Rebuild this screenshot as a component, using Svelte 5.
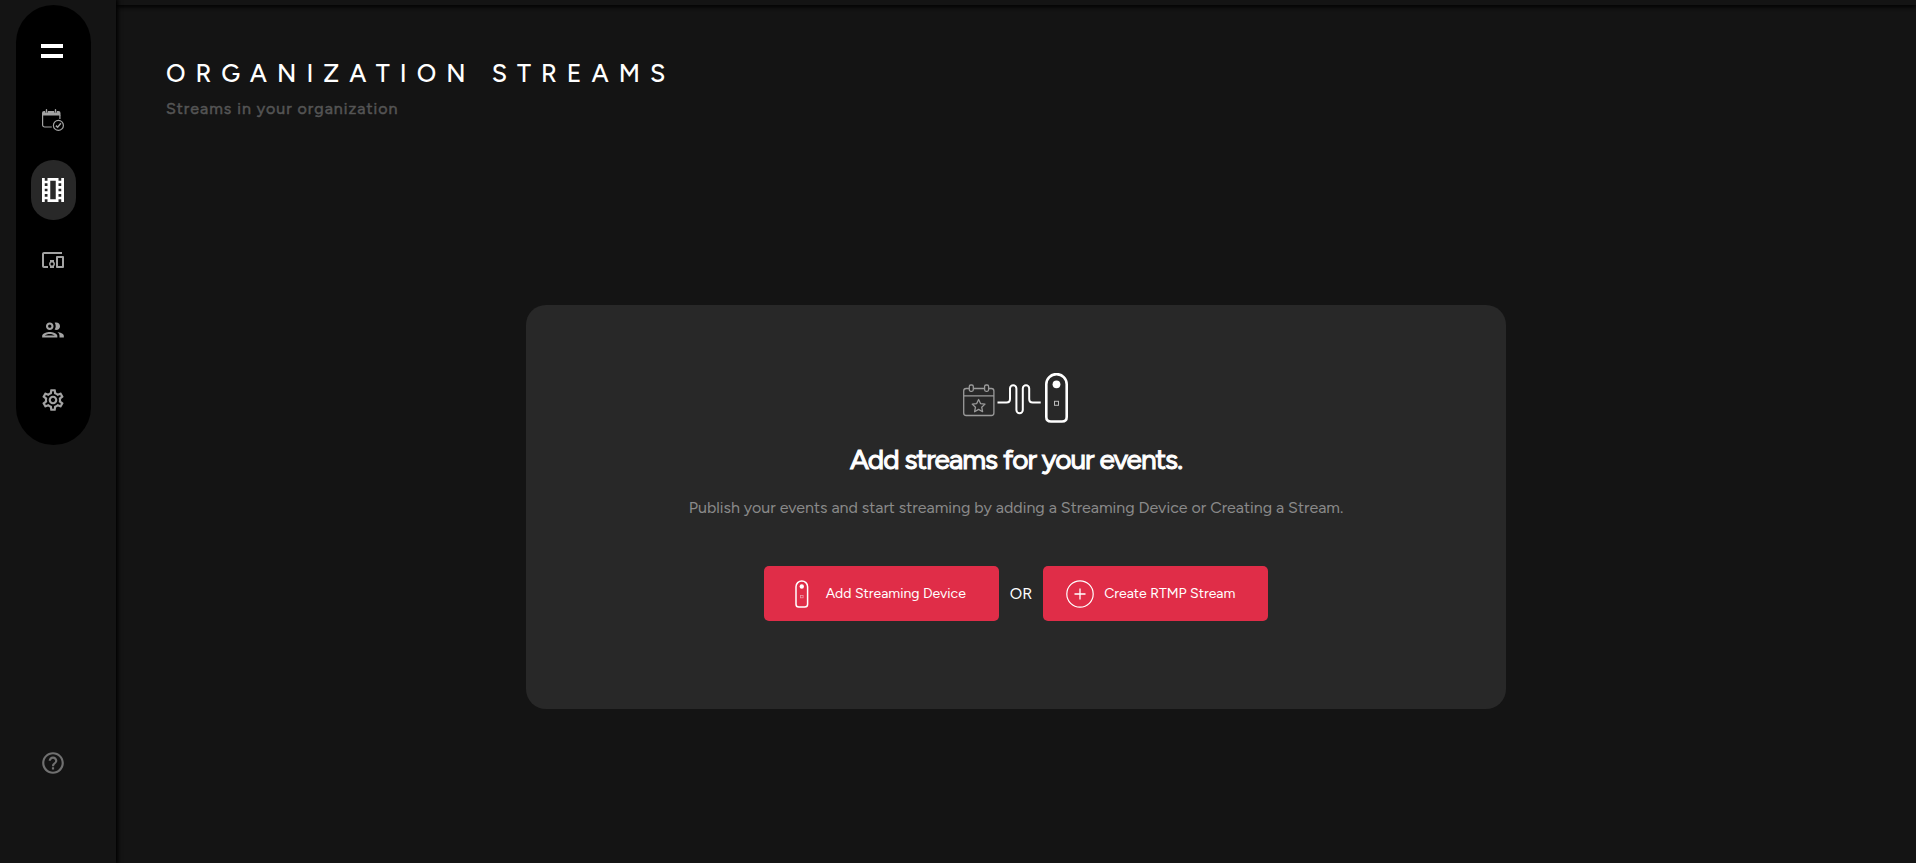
<script>
  const nav = [
    { id: 'events', label: 'Events' },
    { id: 'streams', label: 'Streams' },
    { id: 'devices', label: 'Devices' },
    { id: 'people', label: 'People' },
    { id: 'settings', label: 'Settings' }
  ];
  let active = $state('streams');
</script>

<div class="shell">
  <aside>
    <nav class="rail" aria-label="Main">
      <button class="item menu" aria-label="Menu">
        <svg width="22" height="16" viewBox="0 -2 22 16"><path d="M0 0h22v4H0zM0 10h22v4H0z" /></svg>
      </button>
      {#each nav as n}
        <button class="item" class:active={active === n.id} aria-label={n.label} onclick={() => (active = n.id)}>
          {#if n.id === 'events'}
            <svg width="22" height="22" viewBox="0 0 22 22">
              <path d="M0 6.500V4a2 2 0 0 1 2-2h1.200v1.500h2.600V2h6.400v1.500h2.600V2H16.500a2 2 0 0 1 2 2v2.500z" />
              <path d="M4.500 .7V3M13.500 .7V3" fill="none" stroke="currentColor" stroke-width="1.400" stroke-linecap="round" />
              <path d="M.6 6v10a2 2 0 0 0 2 2h7.200M17.900 6v4" fill="none" stroke="currentColor" stroke-width="1.200" />
              <circle cx="16.400" cy="16.400" r="5" fill="none" stroke="currentColor" stroke-width="1.200" />
              <path d="m13.900 16.600 1.700 1.600 3.300-3.900" fill="none" stroke="currentColor" stroke-width="1.500" />
            </svg>
          {:else if n.id === 'streams'}
            <svg width="22" height="24" viewBox="4 3 16 18" preserveAspectRatio="none">
              <path d="M18 3v2h-2V3H8v2H6V3H4v18h2v-2h2v2h8v-2h2v2h2V3h-2zM8 17H6v-2h2v2zm0-4H6v-2h2v2zm0-4H6V7h2v2zm6 10h-4V5h4v14zm4-2h-2v-2h2v2zm0-4h-2v-2h2v2zm0-4h-2V7h2v2z" />
            </svg>
          {:else if n.id === 'devices'}
            <svg width="24" height="24" viewBox="0 0 24 24">
              <path d="M3 6h18V4H3c-1.100 0-2 .9-2 2v12c0 1.100.9 2 2 2h4v-2H3V6zm10 6H9v1.780c-.61.55-1 1.330-1 2.220s.39 1.670 1 2.220V20h4v-1.780c.61-.55 1-1.340 1-2.220s-.39-1.670-1-2.220V12zm-2 5.500c-.83 0-1.500-.67-1.500-1.500s.67-1.500 1.500-1.500 1.500.67 1.500 1.500-.67 1.500-1.500 1.500zM22 8h-6c-.5 0-1 .5-1 1v10c0 .5.5 1 1 1h6c.5 0 1-.5 1-1V9c0-.5-.5-1-1-1zm-1 10h-4v-8h4v8z" />
            </svg>
          {:else if n.id === 'people'}
            <svg width="26" height="26" viewBox="0 0 24 24">
              <path d="M9 13.750c-2.340 0-7 1.170-7 3.500V19h14v-1.750c0-2.330-4.660-3.500-7-3.500zM4.340 17c.84-.58 2.870-1.250 4.660-1.250s3.820.67 4.660 1.250H4.340zM9 12c1.930 0 3.500-1.570 3.500-3.500S10.930 5 9 5 5.500 6.570 5.500 8.500 7.070 12 9 12zm0-5c.83 0 1.500.67 1.500 1.500S9.830 10 9 10s-1.500-.67-1.500-1.500S8.170 7 9 7zm7.040 6.810c1.160.84 1.960 1.960 1.960 3.440V19h4v-1.750c0-2.020-3.500-3.170-5.960-3.440zM15 12c1.930 0 3.500-1.570 3.500-3.500S16.930 5 15 5c-.54 0-1.040.13-1.500.35.63.89 1 1.980 1 3.150s-.37 2.260-1 3.150c.46.22.96.35 1.500.35z" />
            </svg>
          {:else}
            <svg width="26" height="26" viewBox="0 0 24 24">
              <path d="M19.430 12.980c.04-.32.07-.64.07-.98 0-.34-.03-.66-.07-.98l2.110-1.650c.19-.15.24-.42.12-.64l-2-3.460c-.09-.16-.26-.25-.43-.25-.06 0-.12.01-.17.03l-2.490 1c-.52-.4-1.080-.73-1.690-.98l-.38-2.650C14.460 2.180 14.250 2 14 2h-4c-.25 0-.46.18-.49.42l-.38 2.650c-.61.25-1.170.59-1.690.98l-2.490-1c-.06-.02-.12-.03-.18-.03-.17 0-.34.09-.43.25l-2 3.460c-.13.22-.07.49.12.64l2.110 1.650c-.04.32-.07.65-.07.98 0 .33.03.66.07.98l-2.110 1.650c-.19.15-.24.42-.12.64l2 3.460c.09.16.26.25.43.25.06 0 .12-.01.17-.03l2.490-1c.52.4 1.080.73 1.690.98l.38 2.650c.03.24.24.42.49.42h4c.25 0 .46-.18.49-.42l.38-2.650c.61-.25 1.170-.59 1.690-.98l2.490 1c.06.02.12.03.18.03.17 0 .34-.09.43-.25l2-3.460c.12-.22.07-.49-.12-.64l-2.110-1.650zm-1.980-1.710c.04.31.05.52.05.73 0 .21-.02.43-.05.73l-.14 1.130.89.7 1.080.84-.7 1.210-1.270-.51-1.040-.42-.9.68c-.43.32-.84.56-1.250.73l-1.060.43-.16 1.130-.2 1.350h-1.400l-.19-1.350-.16-1.130-1.060-.43c-.43-.18-.83-.41-1.230-.71l-.91-.7-1.060.43-1.270.51-.7-1.210 1.080-.84.89-.7-.14-1.130c-.03-.31-.05-.54-.05-.74s.02-.43.05-.73l.14-1.130-.89-.7-1.080-.84.7-1.210 1.270.51 1.040.42.9-.68c.43-.32.84-.56 1.250-.73l1.060-.43.16-1.130.2-1.350h1.390l.19 1.350.16 1.130 1.060.43c.43.18.83.41 1.230.71l.91.7 1.060-.43 1.270-.51.7 1.210-1.070.85-.89.7.14 1.130zM12 8c-2.210 0-4 1.790-4 4s1.790 4 4 4 4-1.790 4-4-1.790-4-4-4zm0 6c-1.100 0-2-.9-2-2s.9-2 2-2 2 .9 2 2-.9 2-2 2z" />
            </svg>
          {/if}
        </button>
      {/each}
    </nav>
    <button class="item help" aria-label="Help">
      <svg width="26" height="26" viewBox="0 0 24 24">
        <path d="M11 18h2v-2h-2v2zm1-16C6.480 2 2 6.480 2 12s4.480 10 10 10 10-4.480 10-10S17.520 2 12 2zm0 18c-4.410 0-8-3.590-8-8s3.590-8 8-8 8 3.590 8 8-3.590 8-8 8zm0-14c-2.210 0-4 1.790-4 4h2c0-1.100.9-2 2-2s2 .9 2 2c0 2-3 1.750-3 5h2c0-2.250 3-2.500 3-5 0-2.210-1.790-4-4-4z" />
      </svg>
    </button>
  </aside>

  <div class="content">
    <div class="topbar"></div>
    <header>
      <h1>ORGANIZATION STREAMS</h1>
      <p>Streams in your organization</p>
    </header>
    <main>
      <section class="card">
        <svg width="106" height="50" viewBox="0 0 106 50" fill="none" aria-hidden="true">
          <g stroke="#9a9a9a" stroke-width="1.300">
            <path d="M6 15.500H3.200a2.500 2.500 0 0 0-2.500 2.500v22A2.500 2.500 0 0 0 3.200 42.500h25.200a2.500 2.500 0 0 0 2.500-2.500V18a2.500 2.500 0 0 0-2.500-2.500h-2.500M10.500 15.500h11.200M.7 22.800h30.200" />
            <rect x="6.300" y="12" width="4" height="6.300" rx="1.500" />
            <rect x="21.600" y="12" width="4" height="6.300" rx="1.500" />
            <path d="m15.600 26.500 1.900 4.100 4.500.5-3.300 3.100.9 4.500-4-2.300-4 2.300.9-4.500-3.300-3.100 4.500-.5z" stroke-linejoin="round" />
          </g>
          <path d="M34.500 29.500h9q3.500 0 3.500-3.500V15.500a3.200 3.200 0 0 1 6.400 0v21.500a3.200 3.200 0 0 0 6.400 0V15.500a3.200 3.200 0 0 1 6.400 0v10.500q0 3.500 3.500 3.500h8" stroke="#fff" stroke-width="2" />
          <path d="M83.300 11.300a10.200 10.200 0 0 1 20.400 0V44q0 4.500-4.700 4.500h-11q-4.700 0-4.700-4.500z" stroke="#fff" stroke-width="2.600" />
          <circle cx="93.500" cy="11.300" r="3.900" fill="#fff" />
          <rect x="91.500" y="28.300" width="4" height="4" stroke="#bbb" stroke-width="1" />
        </svg>
        <h2>Add streams for your events.</h2>
        <p>Publish your events and start streaming by adding a Streaming Device or Creating a Stream.</p>
        <div class="actions">
          <button class="cta device">
            <svg width="14" height="28" viewBox="0 0 14 28" fill="none" aria-hidden="true">
              <path d="M1 6.700a5.800 5.800 0 0 1 11.600 0v17.500q0 2.800-2.800 2.800h-6q-2.800 0-2.800-2.800z" stroke="#fff" stroke-width="1.500" />
              <circle cx="6.800" cy="6.500" r="2.200" fill="#fff" />
              <rect x="5.500" y="15.500" width="2.600" height="2.300" stroke="#fff" stroke-opacity=".5" stroke-width=".8" />
            </svg>
            <span>Add Streaming Device</span>
          </button>
          <span class="or">OR</span>
          <button class="cta">
            <svg width="28" height="28" viewBox="0 0 28 28" fill="none" stroke="#fff" aria-hidden="true">
              <circle cx="14" cy="14" r="13.200" stroke-width="1.200" />
              <path d="M14 8.500v11M8.500 14h11" stroke-width="1.300" />
            </svg>
            <span>Create RTMP Stream</span>
          </button>
        </div>
      </section>
    </main>
  </div>
</div>

<style>
  :global(body) {
    margin: 0;
    background: #141414;
  }
  .shell {
    display: flex;
    min-height: 100vh;
    background: #141414;
    color: #fff;
    font-family: Figtree, Lato, sans-serif;
  }
  button {
    border: 0;
    padding: 0;
    font: inherit;
    color: inherit;
    background: none;
    cursor: pointer;
  }
  svg {
    display: block;
    flex: none;
  }
  aside {
    box-sizing: border-box;
    flex: none;
    width: 116px;
    padding: 5px 25px 70px 16px;
    display: flex;
    flex-direction: column;
    align-items: center;
    justify-content: space-between;
    box-shadow: 1px 0 4px 1px #000;
    z-index: 1;
    background: #141414;
  }
  .rail {
    box-sizing: border-box;
    width: 100%;
    padding: 15px 0;
    display: flex;
    flex-direction: column;
    align-items: center;
    gap: 10px;
    border-radius: 38px;
    background: #000;
  }
  .item {
    box-sizing: border-box;
    width: 45px;
    height: 60px;
    padding-right: 1px;
    display: flex;
    align-items: center;
    justify-content: center;
    border-radius: 22px;
    color: #a3a3a3;
  }
  .item svg {
    fill: currentColor;
  }
  .menu {
    padding-right: 3px;
    color: #fff;
  }
  .active {
    background: #282828;
    color: #fff;
  }
  .help {
    color: #707070;
  }
  .content {
    flex: 1;
    display: flex;
    flex-direction: column;
  }
  .topbar {
    height: 5px;
    box-shadow: 0 2px 4px #000;
  }
  header {
    padding: 50px 50px 31px;
  }
  h1 {
    margin: 0;
    font-size: 25px;
    line-height: 36px;
    font-weight: 500;
    letter-spacing: 10px;
  }
  header p {
    margin: 7px 0 0;
    font-size: 16px;
    line-height: 22px;
    letter-spacing: 1px;
    color: #555;
    -webkit-text-stroke: 0.03em;
  }
  main {
    flex: 1;
    display: flex;
    align-items: center;
    justify-content: center;
  }
  .card {
    box-sizing: border-box;
    width: 980px;
    max-width: 90%;
    padding: 68px 40px 88px;
    display: flex;
    flex-direction: column;
    align-items: center;
    border-radius: 20px;
    background: #282828;
    text-align: center;
  }
  h2 {
    margin: 18px 0 0;
    font-size: 28px;
    line-height: 36px;
    font-weight: 400;
    letter-spacing: -1px;
    -webkit-text-stroke: 1px;
  }
  .card p {
    margin: 20px 0 0;
    font-size: 16px;
    line-height: 22px;
    color: #8a8a8a;
  }
  .actions {
    margin-top: 47px;
    display: flex;
    align-items: center;
    gap: 11px;
  }
  .or {
    font-size: 16px;
  }
  .cta {
    height: 55px;
    padding: 0 33px 0 23px;
    display: flex;
    align-items: center;
    gap: 10px;
    border-radius: 5px;
    background: #e02d48;
    font-size: 14px;
  }
  .device {
    padding: 0 33px 0 31px;
    gap: 17px;
  }
</style>
